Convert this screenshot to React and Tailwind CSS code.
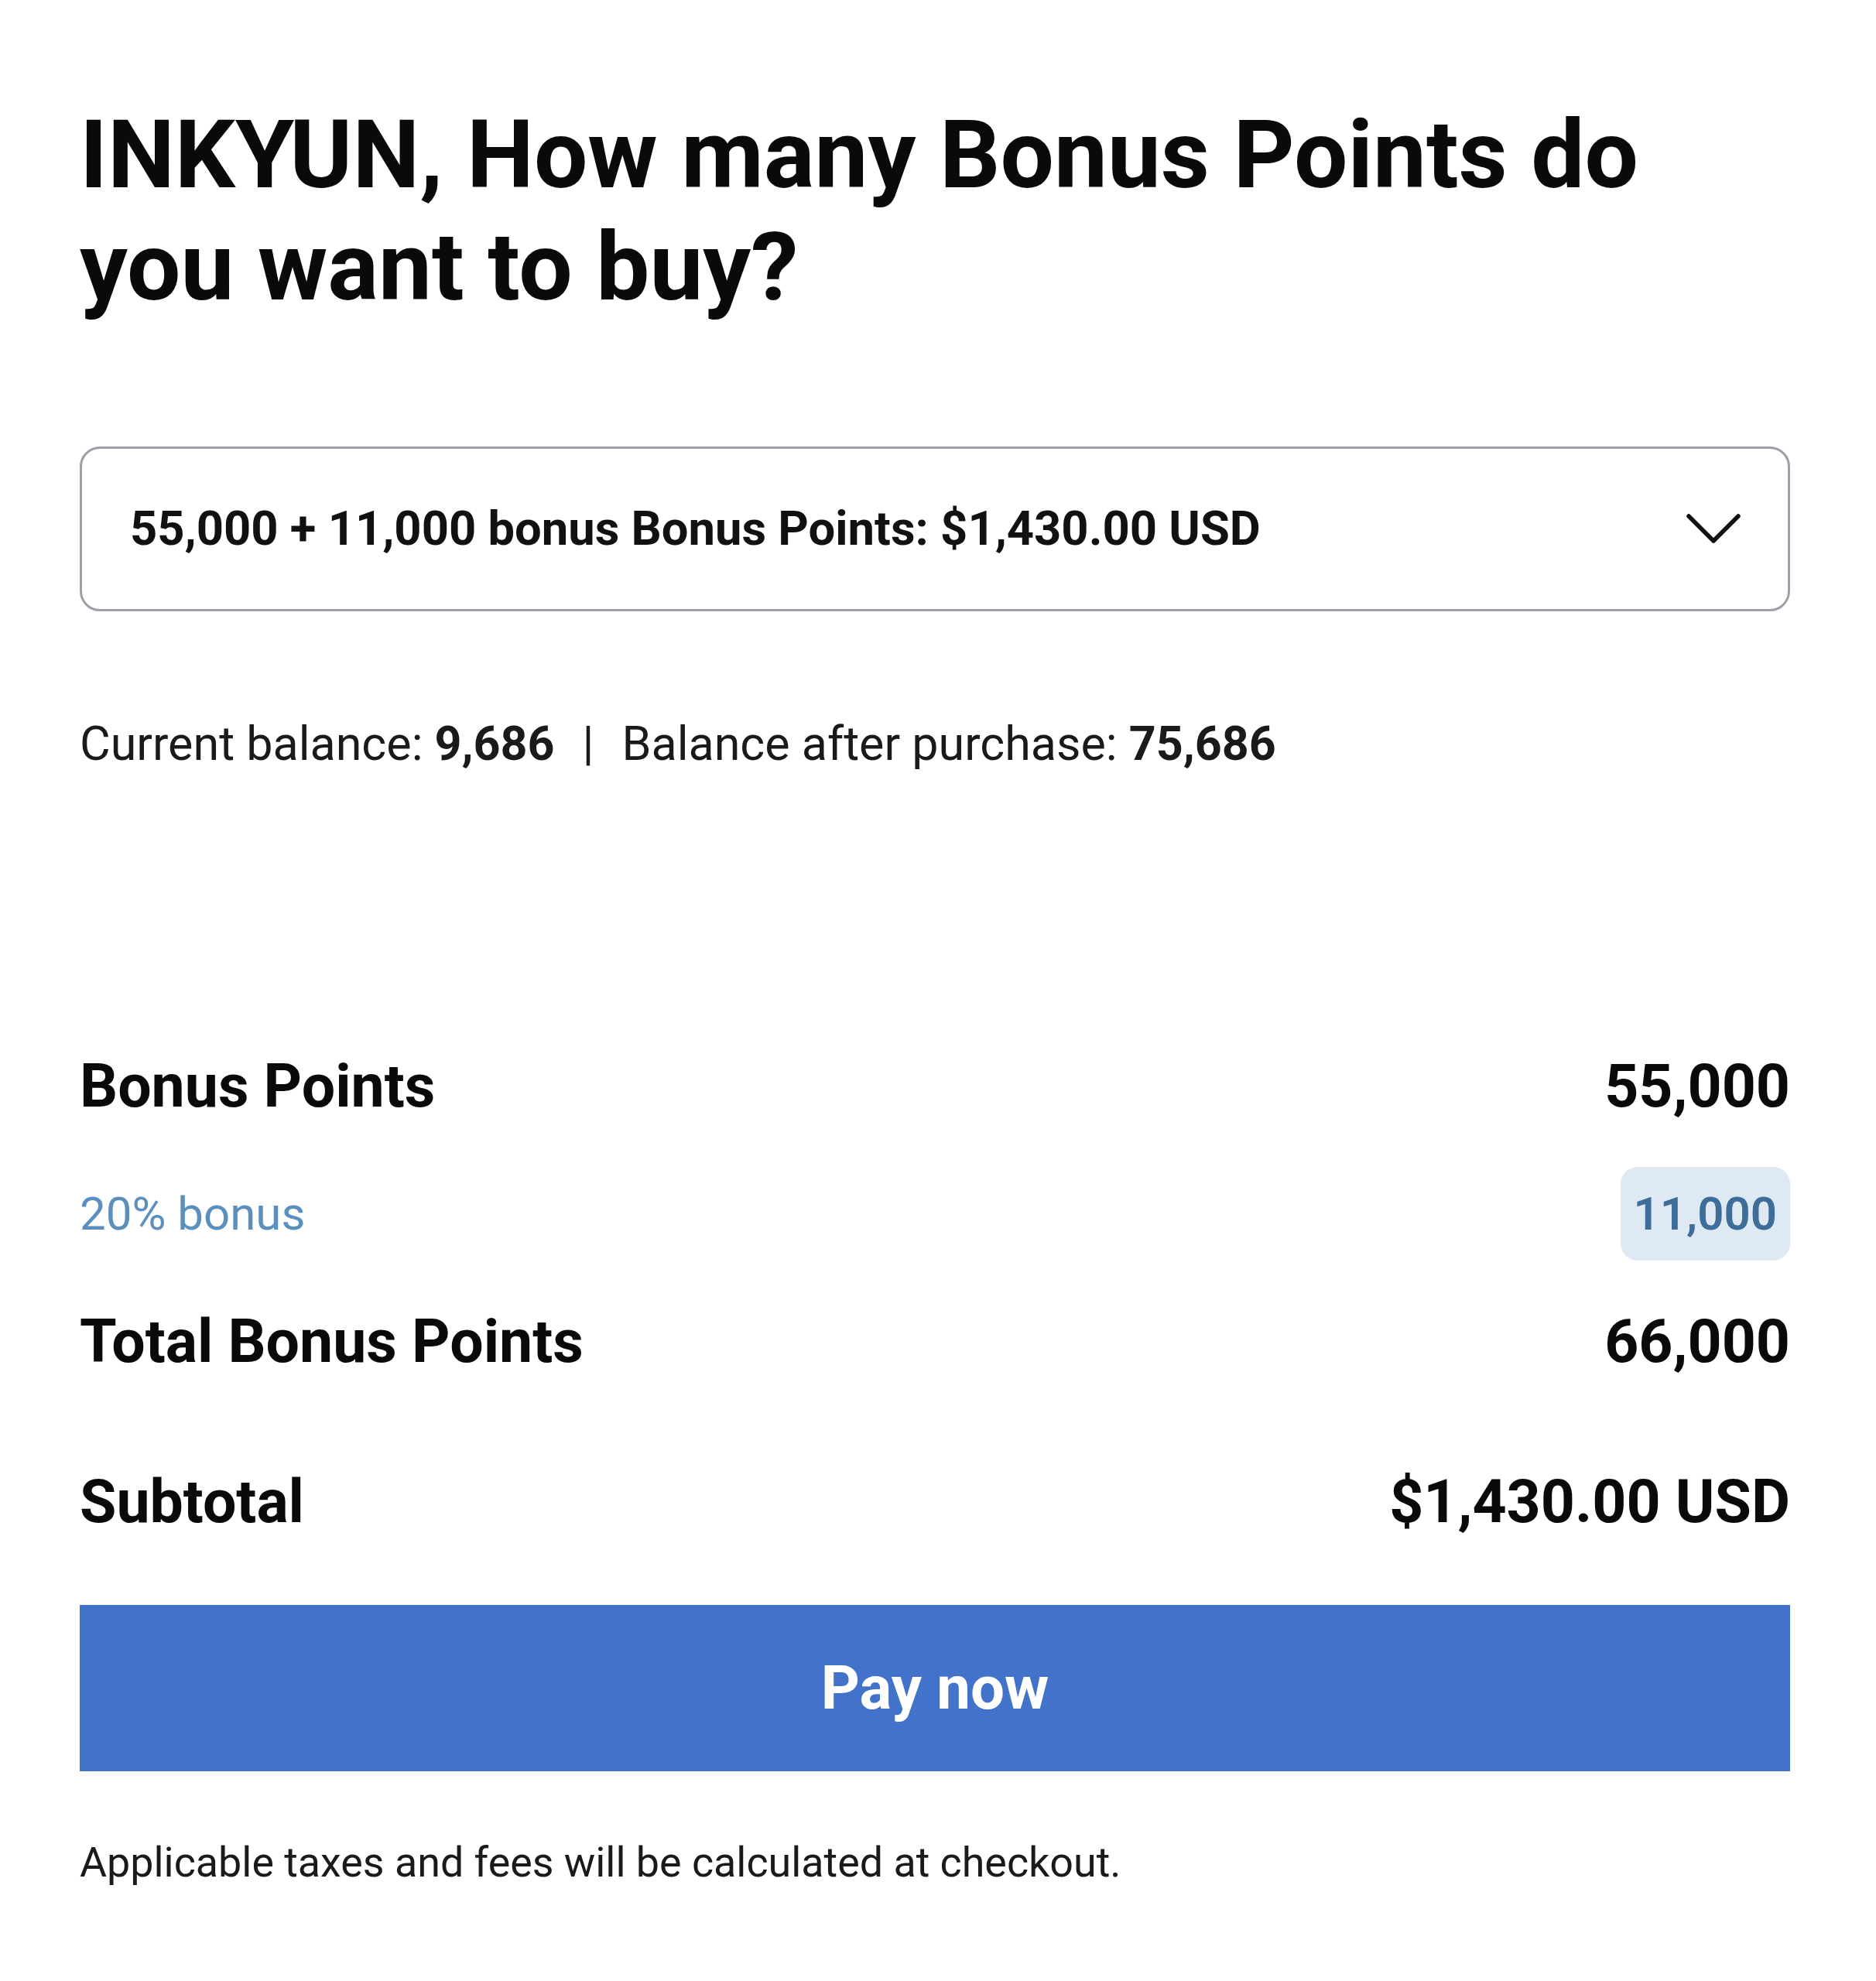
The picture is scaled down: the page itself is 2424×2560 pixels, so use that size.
import { useState } from 'react';

const PACKAGE = {
    points: '55,000',
    bonus: '11,000',
    total: '66,000',
    price: '$1,430.00 USD',
};

export default function App() {
    const [pkg] = useState(PACKAGE);

    return (
        <div className="min-h-screen bg-white font-['Roboto',sans-serif] text-[#0a0a0a] pl-[103px] pr-[111px] pt-[128px] pb-[120px]">
            <h1 className="text-[123px] leading-[145px] font-bold">
                INKYUN, How many Bonus Points do you want to buy?
            </h1>

            <button className="mt-[159px] w-full h-[213px] flex items-center justify-between border-[3px] border-[#9d9fa9] rounded-[26px] pl-[62px] pr-[60px] bg-white">
                <span className="text-[61.5px] font-bold text-[#111]">
                    {pkg.points} + {pkg.bonus} bonus Bonus Points: {pkg.price}
                </span>
                <svg width="72" height="42" viewBox="0 0 72 42" fill="none">
                    <polyline points="4,4 36,36 68,4" stroke="#111" strokeWidth="5.5" strokeLinecap="round" strokeLinejoin="round" />
                </svg>
            </button>

            <p className="mt-[135px] text-[61px] leading-[72px] text-[#1a1a1a]">
                Current balance: <span className="font-bold">9,686</span>
                <span className="mx-[36px]">|</span>
                Balance after purchase: <span className="font-bold">75,686</span>
            </p>

            <div className="mt-[361px] flex items-center justify-between text-[77px] leading-[92px] font-bold">
                <span>Bonus Points</span>
                <span>{pkg.points}</span>
            </div>

            <div className="mt-[58px] flex items-center justify-between h-[121px]">
                <span className="text-[60px] text-[#5b8fbd]">20% bonus</span>
                <span className="h-full flex items-center px-[17px] rounded-[22px] bg-[#dee9f3] text-[60px] font-semibold text-[#3d6d98]">
                    {pkg.bonus}
                </span>
            </div>

            <div className="mt-[59px] flex items-center justify-between text-[77px] leading-[92px] font-bold">
                <span>Total Bonus Points</span>
                <span>{pkg.total}</span>
            </div>

            <div className="mt-[115px] flex items-center justify-between text-[77px] leading-[92px] font-bold">
                <span>Subtotal</span>
                <span>{pkg.price}</span>
            </div>

            <button className="mt-[87px] w-full h-[215px] bg-[#4272c9] text-white text-[78px] font-bold">
                Pay now
            </button>

            <p className="mt-[87px] text-[53.8px] leading-[62px] text-[#1a1a1a]">
                Applicable taxes and fees will be calculated at checkout.
            </p>
        </div>
    );
}
